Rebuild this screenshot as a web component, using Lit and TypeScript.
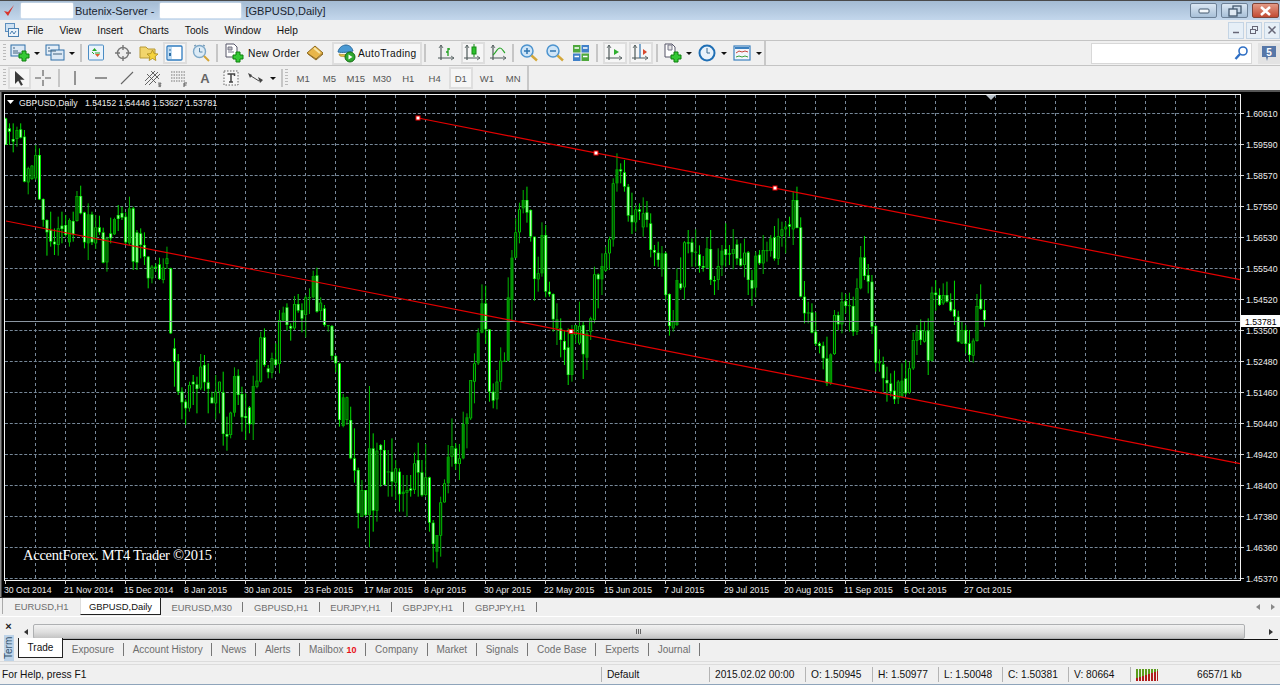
import { LitElement, html, css, svg } from 'lit';
import { customElement } from 'lit/decorators.js';

// bars are read off the reference in crop coordinates: kind top bottom high low
// kind: w = white body, o = hollow body, g = dark green body
const SEGMENTS = [
  { ox: 0, oy: 95, data: `w 70 150 68 150,w 100 110 85 150,w 132 140 85 172,o 105 132 95 155,w 103 128 85 130,w 125 260 105 262,o 220 262 215 298,o 212 252 210 255,o 180 250 150 255,w 180 313 160 315,w 312 375 310 395,w 375 412 373 482,w 405 440 350 455,w 440 448 400 480,o 400 450 365 482,w 392 402 350 445,w 390 420 360 425,g 375 442 370 455,w 378 418 350 440,o 303 378 288 380,w 303 355 272 358,w 352 442 350 460,g 358 445 325 495,w 358 442 350 450,o 397 445 360 462,w 397 412 362 420,w 412 503 398 505,o 430 502 425 530,w 415 430 368 445,g 372 418 368 420,w 360 372 330 408,w 354 368 335 375,w 365 442 352 450,g 340 445 305 450,w 340 500 335 525,w 412 503 405 525,w 415 450 400 490,w 450 485 412 510,w 485 550 483 580,o 515 550 510 565,w 515 518 505 530,w 508 552 488 555,o 518 555 490 565` },
  { ox: 165, oy: 190, data: `o 205 222 170 237,w 235 430 233 432,w 475 515 445 590,w 513 605 492 615,w 605 637 592 688,w 635 655 628 705,o 585 655 575 665,w 575 583 555 645,w 583 597 560 670,o 530 595 492 600,w 525 577 495 603,w 577 597 520 670,w 622 640 605 640,o 605 640 555 688,o 575 605 575 670,w 607 732 545 767,w 732 740 680 782,o 668 735 665 745,g 558 668 532 680,w 557 615 538 645,w 612 682 590 725,w 678 684 610 750,w 652 703 648 730,g 588 703 557 750,o 572 590 508 595,o 442 575 425 578,w 442 525 415 530,w 535 547 525 565,o 505 548 488 565,w 508 525 460 527,o 390 522 360 550,g 368 392 350 395,w 352 405 340 422,w 408 416 400 452,o 342 415 318 420,w 342 362 312 368,w 360 386 340 427,o 322 375 315 442,g 321 323 295 372,g 258 322 242 325,w 256 365 233 368,o 338 363 322 390,w 355 405 345 410,g 405 408 405 425,w 408 498 405 510,w 498 520 495 547,w 520 690 518 710,g 622 708 612 712,o 622 690 620 705` },
  { ox: 300, oy: 300, data: `w 360 475 320 478,w 475 512 385 548,w 510 640 503 685,o 570 650 540 650,w 570 645 570 648,g 445 645 258 742,w 445 632 400 695,o 452 632 428 665,w 435 450 432 560,w 450 555 420 555,g 514 516 450 590,w 515 545 415 590,o 505 548 480 600,w 515 583 505 635,g 575 582 525 635,o 570 578 525 650,w 565 572 525 590,o 490 570 458 582,w 480 518 428 590,w 517 586 480 590,o 532 585 432 590,w 532 668 530 695,w 668 732 660 787,g 705 755 705 805,o 607 707 590 770,o 550 607 538 608,g 470 550 435 580,o 438 470 355 500,w 445 492 430 510,o 475 492 432 540,g 372 475 335 478,g 352 372 340 445` },
  { ox: 165, oy: 190, data: `o 570 685 570 690,o 520 575 490 640,g 428 520 415 525,g 340 428 283 430,w 340 418 287 462,w 418 605 418 635,w 605 632 580 655,o 575 628 540 658,o 512 575 472 600,g 512 514 487 514,g 322 512 262 515,g 203 330 180 395,o 127 203 85 205,o 58 127 38 160,g 30 55 0 70,w 30 68 -10 98,w 60 140 58 155,w 140 267 140 332,o 250 268 200 305,g 135 250 97 260,w 135 305 105 322,w 305 313 275 320,w 312 388 310 425,g 388 415 340 465,w 415 450 385 502,w 453 480 420 525,w 472 555 415 585,g 430 555 405 575,o 405 435 405 460,o 408 460 335 465,w 405 493 395 567,g 430 503 420 540,o 385 425 380 450` },
  { ox: 590, oy: 140, data: `o 403 540 380 550,w 403 418 400 505,g 378 418 340 465,o 340 392 320 395,o 298 340 290 390,o 130 298 115 320,g 88 130 40 155,w 88 94 70 130,w 97 140 60 155,w 140 227 132 245,w 225 247 158 282,o 208 247 195 275,w 208 215 190 240,o 220 262 172 290,w 217 240 183 262,w 250 330 220 352,w 330 338 315 378,w 338 360 305 380,g 340 388 318 410,w 340 465 335 480,w 462 558 460 587,o 545 565 510 575,g 420 555 385 558,w 430 445 352 450,o 307 442 303 478,w 307 310 270 340,w 307 337 295 380,g 335 338 268 380,w 343 378 316 398,w 378 383 348 395,g 325 383 292 385,w 327 420 270 435,w 420 424 408 465,o 378 420 325 450,g 332 376 315 408,w 327 345 250 380,w 340 343 315 375,o 327 342 267 388,w 313 356 298 375,w 355 377 310 380,o 338 375 296 412,w 337 420 333 465,w 420 446 390 498,g 347 443 335 472,w 344 370 330 375,o 330 370 285 402,g 330 333 305 365,g 295 333 285 350,w 292 356 258 362,o 288 356 235 375,o 268 288 245 320,g 260 268 245 340,w 253 260 230 290,o 180 268 155 315,w 180 264 140 265,w 262 470 232 472,w 470 520 423 550,g 517 520 485 550,w 517 578 490 580,w 575 612 517 618,w 610 618 605 640,w 617 655 605 688,w 655 730 590 738,g 643 730 640 735,o 525 642 510 645,w 525 553 515 570,o 485 553 457 580,w 483 498 462 520,g 495 497 458 575,w 498 575 470 588,o 445 575 415 585,g 352 445 318 448,w 352 408 288 420,w 405 425 372 460,w 425 560 405 582,w 558 668 555 695,g 665 670 628 695,w 673 715 650 755,w 720 730 680 785,w 730 755 700 770,w 752 778 692 792,o 725 775 720 792,g 722 770 670 772,w 715 760 660 765,o 685 758 665 762,o 600 685 577 690,o 575 602 555 645,w 570 600 538 615,o 572 605 545 608,w 572 662 535 705,o 458 662 440 665,w 458 465 420 512,w 465 495 445 498,o 465 490 430 495,w 465 485 425 488,w 485 512 460 515,w 508 530 422 555,w 530 605 512 607,o 570 610 545 612,w 570 612 555 640,w 610 645 570 665,o 602 647 595 668,o 498 603 462 605,w 477 507 433 510,w 510 540 480 560` },
];

const BARS = SEGMENTS.flatMap((seg) =>
  seg.data.split(',').map((row) => {
    const [kind, top, bot, hi, lo] = row.split(' ');
    return {
      kind,
      top: seg.oy + Number(top) / 3,
      bot: seg.oy + Number(bot) / 3,
      hi: seg.oy + Number(hi) / 3,
      lo: seg.oy + Number(lo) / 3,
    };
  })
);

const PRICES = ['1.60610', '1.59590', '1.58570', '1.57550', '1.56530', '1.55540', '1.54520', '1.53500', '1.52480', '1.51460', '1.50440', '1.49420', '1.48400', '1.47380', '1.46360', '1.45370'];
const DATES = ['30 Oct 2014', '21 Nov 2014', '15 Dec 2014', '8 Jan 2015', '30 Jan 2015', '23 Feb 2015', '17 Mar 2015', '8 Apr 2015', '30 Apr 2015', '22 May 2015', '15 Jun 2015', '7 Jul 2015', '29 Jul 2015', '20 Aug 2015', '11 Sep 2015', '5 Oct 2015', '27 Oct 2015'];
const CHART_TABS = ['EURUSD,H1', 'GBPUSD,Daily', 'EURUSD,M30', 'GBPUSD,H1', 'EURJPY,H1', 'GBPJPY,H1', 'GBPJPY,H1'];
const TERM_TABS = ['Exposure', 'Account History', 'News', 'Alerts', 'Mailbox', 'Company', 'Market', 'Signals', 'Code Base', 'Experts', 'Journal'];
const PERIODS = ['M1', 'M5', 'M15', 'M30', 'H1', 'H4', 'D1', 'W1', 'MN'];

const plus = (x: number, y: number) => svg`<path d="M${x + 3} ${y}h4v3h3v4h-3v3h-4v-3h-3v-4h3z" fill="#35c935" stroke="#0d7f0d" stroke-width="1"/>`;
const axes = svg`<path d="M4 2v15M1 15h16" fill="none" stroke="#4f5a5a" stroke-width="1.2"/><path d="M2 5l2-3 2 3M14 13l3 2-3 2" fill="none" stroke="#4f5a5a" stroke-width=".8"/>`;

// 20x20 toolbar pictures
const ICONS: Record<string, unknown> = {
  newChart: svg`<rect x="1" y="2" width="14" height="11" fill="#dbe8f5" stroke="#2f6fa8"/><path d="M3 5h2M3 8h5M3 10h8" stroke="#40627f"/>${plus(9, 8)}`,
  profiles: svg`<rect x="1" y="2" width="13" height="10" fill="#e5eef7" stroke="#2f6fa8"/><rect x="6" y="7" width="13" height="10" fill="#dbe8f5" stroke="#2f6fa8"/><path d="M3 5h2M3 8h8M8 11h9" stroke="#40627f"/>`,
  market: svg`<rect x="1.500" y="2" width="15" height="15" rx="1" fill="#eaf3fb" stroke="#4a8cc4"/><path d="M5 8l2.500-3 2.500 3z" fill="#23a823"/><path d="M8 10h5M5 9l2 2" stroke="#23a823"/><path d="M8 11l2.500 3 2.500-3z" fill="#df5a2c"/>`,
  nav: svg`<circle cx="10" cy="10" r="5.500" fill="#eee" stroke="#777" stroke-width="1.400"/><path d="M10 2v5M10 13v5M2 10h5M13 10h5" stroke="#777" stroke-width="1.400"/>`,
  folder: svg`<path d="M1 4h6l2 2h7v9H1z" fill="#f2d56c" stroke="#b89a36"/><path d="M13.500 7l1.700 3.600 3.800.4-2.900 2.600.8 3.900-3.400-2-3.400 2 .8-3.900-2.900-2.600 3.800-.4z" fill="#f6d43e" stroke="#a98a1e" stroke-width=".8"/>`,
  data: svg`<rect x="2" y="3" width="15" height="14" rx="1" fill="#fff" stroke="#2f7cc0" stroke-width="1.300"/><rect x="3" y="4" width="4" height="12" fill="#bfdcf3"/><path d="M4 7h2" stroke="#2a6ca4"/><path d="M4 10h2v3H4z" fill="#2a6ca4"/>`,
  tester: svg`<circle cx="8.500" cy="8.500" r="6" fill="#dcebf6" stroke="#7da8c8" stroke-width="1.400"/><path d="M8.500 5v4h3" fill="none" stroke="#5d89ab"/><path d="M3 3l2-1M12 2l2 1" stroke="#5d89ab"/><path d="M13 13l5 5" stroke="#d4a436" stroke-width="2"/>`,
  order: svg`<path d="M2 1h8l3 3v10H2z" fill="#fff" stroke="#556"/><path d="M4 4h4v3H4zM4 9h6" fill="#bbb" stroke="#778"/>${plus(9, 9)}`,
  gold: svg`<path d="M10 3l8 7-7 6-9-6z" fill="#e8b64a" stroke="#8f6a1e"/><path d="M3 11l8 6 7-6" fill="none" stroke="#8f6a1e"/><path d="M9 5l6 5" stroke="#f8e6a8" stroke-width="2"/>`,
  auto: svg`<path d="M2 9c1-5 5-7 8-7s6 2 7 6c-3 1-11 2-15 1z" fill="#4a9ad4" stroke="#2a6a9c"/><path d="M3 11c3 1 9 1 13-1l1 2c-4 2-10 2-13 1z" fill="#e8c44c" stroke="#a98a1e" stroke-width=".7"/><circle cx="14" cy="14" r="5" fill="#2fa82f" stroke="#156b15"/><path d="M12.500 11.500v5l4-2.500z" fill="#fff"/>`,
  bars: svg`${axes}<path d="M11 5v8M9 9h2M11 6h2" fill="none" stroke="#1fa01f" stroke-width="1.300"/>`,
  candle: svg`${axes}<path d="M11 1v13" stroke="#148a14"/><rect x="9" y="4" width="4" height="7" fill="#2cc12c" stroke="#148a14"/>`,
  line: svg`${axes}<path d="M4 12c3-2 4-7 7-7 2 0 3 3 5 5" fill="none" stroke="#2aa52a" stroke-width="1.100"/>`,
  zoomIn: svg`<circle cx="8" cy="8" r="6" fill="#cfe5f7" stroke="#4d94cf" stroke-width="1.500"/><path d="M5 8h6M8 5v6" stroke="#2f74b0" stroke-width="1.500"/><path d="M12.500 12.500l5.500 5" stroke="#d3a73a" stroke-width="2.400"/>`,
  zoomOut: svg`<circle cx="8" cy="8" r="6" fill="#cfe5f7" stroke="#4d94cf" stroke-width="1.500"/><path d="M5 8h6" stroke="#2f74b0" stroke-width="1.500"/><path d="M12.500 12.500l5.500 5" stroke="#d3a73a" stroke-width="2.400"/>`,
  tile: svg`<rect x="2" y="2" width="7.500" height="7.500" fill="#4ea83c"/><rect x="10.500" y="2" width="7.500" height="7.500" fill="#3f80c8"/><rect x="2" y="10.500" width="7.500" height="7.500" fill="#3f80c8"/><rect x="10.500" y="10.500" width="7.500" height="7.500" fill="#4ea83c"/><path d="M3.500 5h4.500M12 5h4.500M3.500 13.500h4.500M12 13.500h4.500" stroke="#fff" stroke-width="1.500"/>`,
  shift: svg`${axes}<path d="M9 6v6l5-3z" fill="#2fae2f"/>`,
  scroll: svg`${axes}<path d="M9 1v14" stroke="#2f74b0" stroke-width="1.200"/><path d="M16 9l-4-3v6z" fill="#d8472c"/>`,
  addDoc: svg`<path d="M3 1h7l3 3v10H3z" fill="#fff" stroke="#556"/><path d="M6 2h4v5H6z" fill="#e5e5e5" stroke="#778"/>${plus(9, 9)}`,
  clock: svg`<circle cx="10" cy="10" r="7.500" fill="#e8f2fb" stroke="#1f6fb5" stroke-width="2"/><path d="M10 5v5h3" fill="none" stroke="#3a6a90"/>`,
  template: svg`<rect x="2" y="3" width="16" height="14" fill="#f2f6fb" stroke="#3b80bf" stroke-width="1.200"/><rect x="3" y="4" width="14" height="2" fill="#3b80bf"/><path d="M4 10l3-2 3 1 3-1 3 1" fill="none" stroke="#c6453a"/><path d="M4 14l3-1 3 1 3-1 3 1" fill="none" stroke="#3aa03a"/>`,
  cursor: svg`<path d="M5 3v13l3.200-3.200 2.800 5 1.900-1-2.800-5h4.500z" fill="#3a3a3a"/>`,
  cross: svg`<path d="M10 2v6M10 12v6M2 10h6M12 10h6" stroke="#555" stroke-width="1.100"/>`,
  vline: svg`<path d="M10 3v14" stroke="#555" stroke-width="1.200"/>`,
  hline: svg`<path d="M4 10h12" stroke="#555" stroke-width="1.200"/>`,
  trend: svg`<path d="M4 16L16 4" stroke="#666" stroke-width="1.100"/>`,
  channel: svg`<path d="M2 13L12 3M2 17L15 4M6 17L17 6M4 6l9 9M8 3l8 8" stroke="#555" stroke-width=".9"/><path d="M15 15h3v.8h-2.200v1h2v.8h-2v1H18" fill="none" stroke="#555" stroke-width=".7"/>`,
  fibo: svg`<path d="M2 4h14M2 7h14M2 10h14M2 13h14" stroke="#777" stroke-dasharray="1.500 1"/><path d="M15 15h3M15 15v4M15 17h2.500" fill="none" stroke="#555"/>`,
  textBox: svg`<rect x="3" y="3" width="14" height="14" fill="#f7f7f7" stroke="#666" stroke-dasharray="1.500 1.500"/><path d="M6.500 6h7v2M10 6v8M8 14h4" fill="none" stroke="#444" stroke-width="1.500"/>`,
  arrows: svg`<path d="M2 5l4 2-2 3zM12 9l5 3-3 3z" fill="#444"/><path d="M5 8l8 5" stroke="#444"/>`,
};

@customElement('chart-view')
export class ChartView extends LitElement {
  static styles = css`
    :host { display: block; height: 505px; background: #000; }
    svg { display: block; }
    text { font-family: "Liberation Sans", Arial, sans-serif; font-size: 9.7px; fill: #ececec; }
    .brand { font-family: "Liberation Serif", serif; font-size: 14.5px; fill: #fff; }
  `;

  private bar(i: number) {
    const b = BARS[i];
    const x = 5.7 + 3.75 * i;
    const h = Math.max(b.bot - b.top, 1.2);
    const edge = b.kind === 'g' ? '#00a800' : b.kind === 'o' ? '#00c400' : '#00f000';
    const fill = b.kind === 'g' ? '#008400' : b.kind === 'o' ? '#001c00' : '#e8ffe8';
    return svg`
      <rect x=${x - 0.5} y=${b.hi} width="1" height=${b.lo - b.hi} fill=${b.kind === 'w' ? '#00e000' : '#00b400'} />
      <rect x=${x - 1.5} y=${b.top} width="3" height=${h} fill=${edge} />
      <rect x=${x - 0.5} y=${b.top + 0.6} width="1" height=${Math.max(h - 1.2, 0)} fill=${fill} />
    `;
  }

  // axis text is squeezed a little to get Tahoma's narrow figures
  private label(x: number, y: number, text: string, dark = false) {
    return svg`<text transform="translate(${x} ${y}) scale(.9 1)" style=${dark ? 'fill:#000' : ''}>${text}</text>`;
  }

  render() {
    const ys = PRICES.map((_, i) => 113 + 31 * i);
    const xs = Array.from({ length: 42 }, (_, i) => 5 + 30 * i).filter((x) => x < 1240);
    return html`
      <svg width="1280" height="505" viewBox="0 92 1280 505">
        <rect x="0" y="92" width="1.500" height="505" fill="#8a8a8a" />
        ${xs.slice(1).map((x) => svg`<path d="M${x + 0.5} 95V578" stroke="#778899" stroke-dasharray="3 3" />`)}
        ${ys.map((y) => svg`<path d="M5 ${y + 0.5}H1240" stroke="#778899" stroke-dasharray="3 1.800" />
          <path d="M1240 ${y + 0.5}h4" stroke="#d0d0d0" />`)}
        ${BARS.map((_, i) => this.bar(i))}
        <path d="M4.500 321.500H1240" stroke="#8b96a2" />
        <path d="M6 221L1240 463.600M418 118L1240 279.600" stroke="#e40000" stroke-width="1.200" fill="none" />
        ${[[418, 118], [596, 153], [775, 188], [571, 331.500]].map(([x, y]) => svg`
          <rect x=${x - 2.500} y=${y - 2.500} width="5" height="5" fill="#f00000" />
          <rect x=${x - 1.500} y=${y - 1.500} width="3" height="3" fill="#fff" />`)}
        <rect x="4.500" y="94.500" width="1236" height="486" fill="none" stroke="#f4f4f4" />
        <polygon points="986,95 996,95 991,100" fill="#b8c0c8" />
        <polygon points="7,100 14,100 10.500,104" fill="#fff" />
        ${this.label(19, 105.500, 'GBPUSD,Daily')}
        <text x="85" y="105.500" textLength="132" lengthAdjust="spacingAndGlyphs">1.54152 1.54446 1.53627 1.53781</text>
        ${PRICES.map((p, i) => this.label(1246, ys[i] + 3.500, p))}
        <rect x="1241" y="315" width="39" height="12" fill="#fff" />
        ${this.label(1245, 325, '1.53781', true)}
        ${DATES.map((d, i) => svg`<path d="M${5.500 + 60 * i} 580v4" stroke="#d0d0d0" />
          ${this.label(4 + 60 * i, 592.500, d)}`)}
        <text class="brand" x="23" y="560" textLength="189">AccentForex. MT4 Trader ©2015</text>
      </svg>
    `;
  }
}

@customElement('app-root')
export class AppRoot extends LitElement {
  static styles = css`
    :host {
      display: block; width: 1280px; height: 685px; overflow: hidden; background: #f0f0f0;
      font-family: "Liberation Sans", Arial, sans-serif; font-size: 10.2px; color: #111; white-space: nowrap;
    }
    .icon { width: 20px; height: 20px; display: block; flex: none; }

    .title {
      height: 20px; box-sizing: border-box; border-top: 1px solid #4a4a4a; display: flex; align-items: center;
      background: linear-gradient(#a4bbd3, #c3d7ec); font-size: 11px; color: #1a2530; padding-left: 3px;
    }
    .mask { height: 15px; background: #fff; border-radius: 1px; box-shadow: 0 0 2px #fff; }
    .m1 { width: 52px; margin: 0 2px 0 6px; }
    .m2 { width: 81px; margin: 0 4px 0 6px; }
    .check { width: 12px; height: 14px; display: block; }
    .win { margin-left: auto; display: flex; gap: 4px; padding-right: 1px; align-items: center; }
    .wb {
      width: 27px; height: 15px; box-sizing: border-box; border: 1px solid #6c8096; border-radius: 2px;
      background: linear-gradient(#dbe7f3, #a8c0d8); display: flex; align-items: center; justify-content: center;
    }
    .wb.close { background: linear-gradient(#e39a86, #c24a32); border-color: #7d4438; }

    .menu { height: 20px; display: flex; align-items: center; padding-left: 5px; }
    .menu .logo { width: 14px; height: 15px; margin-right: 8px; }
    .menu span { margin-right: 16px; }
    .mdi { margin-left: auto; display: flex; gap: 2px; height: 17px; }
    .mdi div {
      width: 16px; box-sizing: border-box; border: 1px solid #c4d4e4; background: #e6eff7;
      display: flex; align-items: center; justify-content: center;
    }

    .rebar { height: 49px; border-top: 1px solid #c4c4c4; border-bottom: 2px solid #555; }
    .row { height: 24px; display: flex; align-items: center; }
    .row + .row { border-top: 1px solid #c4c4c4; }
    .tb { height: 100%; display: flex; align-items: center; border-right: 2px solid #c8c8c8; box-sizing: border-box; padding-left: 3px; }
    .t1 { width: 766px; }
    .t2 { width: 529px; }
    .sep { width: 2px; height: 18px; background: #c6c6c6; margin: 0 2px; flex: none; }
    .sep.wide { margin-right: 8px; }
    .sep.mid { margin-right: 4px; }
    .sep.tight { margin-left: 0; }
    .btn { width: 26px; height: 22px; display: flex; align-items: center; justify-content: center; flex: none; box-sizing: border-box; }
    .btn.on { border: 2px solid #dedede; background: #f6f6f6; width: 24px; margin: 0 1px; }
    .btn.first { width: 23px; margin: 0 -1px 0 0; }
    .dd { width: 35px; height: 22px; display: flex; align-items: center; padding-left: 2px; box-sizing: border-box; flex: none; }
    .arrow { width: 0; height: 0; border: 3px solid transparent; border-top: 3px solid #111; border-bottom: 0; margin-left: 4px; }
    .newo { display: flex; align-items: center; gap: 4px; padding-left: 4px; letter-spacing: .3px; flex: none; width: 82px; box-sizing: border-box; }
    .auto {
      width: 90px; height: 23px; box-sizing: border-box; border: 2px solid #dedede; background: #f6f6f6;
      display: flex; align-items: center; gap: 2px; padding-left: 2px; margin-left: 4px; flex: none; letter-spacing: .3px;
    }
    .per { width: 26.3px; height: 22px; display: flex; align-items: center; justify-content: center; color: #555; font-size: 9.5px; box-sizing: border-box; flex: none; }
    .per.on { border: 2px solid #dedede; background: #f6f6f6; width: 24px; margin: 0 1px; }
    .letter { font-weight: 700; font-size: 13px; color: #666; }
    .handle { width: 3px; height: 18px; margin-right: 2px; flex: none; background: repeating-linear-gradient(#bbb 0 1px, transparent 1px 3px); }
    .search {
      margin-left: auto; width: 161px; height: 21px; background: #fff; box-sizing: border-box; border: 1px solid #d8d8d8;
      display: flex; align-items: center; justify-content: flex-end; padding-right: 2px;
    }
    .bubble { margin: 0 0 0 6px; width: 22px; height: 21px; display: flex; align-items: center; justify-content: center; background: #e3e3e3; }

    .ctabs { height: 20px; display: flex; align-items: stretch; border-bottom: 1px solid #fff; padding-left: 2px; color: #6e6e6e; box-shadow: inset 0 1px 0 #2f2f2f; box-sizing: border-box; font-size: 9.4px; }
    .ctab { display: flex; align-items: center; justify-content: center; margin: 5px 0 4px; border-right: 1px solid #777; padding: 0 10.500px; flex: none; }
    .ctab.first { border: 0; width: 78px; padding: 0; margin: 1px 0 2px; box-sizing: border-box; border-left: 1px solid #aaa; }
    .ctab.on { background: #fff; color: #111; margin: 1px 0 1px; border-right: 1.500px solid #222; border-bottom: 1.500px solid #222; border-left: 1px solid #ddd; padding: 0; width: 81px; box-sizing: border-box; }
    .scrollers { margin-left: auto; display: flex; align-items: center; gap: 11px; padding-right: 5px; }
    .lt, .rt { width: 0; height: 0; border: 3.500px solid transparent; }
    .lt { border-right: 4px solid #888; border-left: 0; }
    .rt { border-left: 4px solid #888; border-right: 0; }

    .term { height: 45px; box-sizing: border-box; display: flex; border-bottom: 1px solid #dcdcdc; }
    .side { width: 17px; flex: none; display: flex; flex-direction: column; align-items: center; padding-top: 4px; box-sizing: border-box; }
    .x { font-weight: 700; font-size: 11px; line-height: 10px; color: #222; }
    .vlabel {
      margin-top: 4px; writing-mode: vertical-rl; transform: rotate(180deg); background: #bdd3e8; color: #35536d;
      width: 10px; height: 26px; font-size: 10px; line-height: 10px; text-align: center;
    }
    .tmain { flex: 1; padding: 7px 2px 0 1px; min-width: 0; }
    .sbar { height: 15px; display: flex; border-bottom: 1.500px solid #111; align-items: stretch; }
    .send { width: 15px; display: flex; align-items: center; justify-content: center; flex: none; }
    .send.right { width: 33px; justify-content: flex-end; padding-right: 5px; box-sizing: border-box; }
    .send .lt { border-right-color: #333; }
    .send .rt { border-left-color: #333; }
    .thumb {
      flex: 1; border: 1px solid #aeb0b2; border-radius: 2px; background: linear-gradient(#f2f2f2, #dedede 55%, #c4c4c4);
      display: flex; align-items: center; justify-content: center;
    }
    .grip { width: 6px; height: 5px; background: repeating-linear-gradient(90deg, #666 0 1px, transparent 1px 2px); }
    .ttabs { height: 18px; display: flex; align-items: stretch; color: #6e6e6e; font-size: 10px; }
    .ttab { margin: 3px 0 2px; padding: 0 8.800px; border-right: 1px solid #777; display: flex; align-items: center; flex: none; }
    .ttab.on { width: 45px; padding: 0; justify-content: center; margin: -2px 0 0; background: #fff; color: #111; border-right: 1.500px solid #222; border-bottom: 1.500px solid #222; border-left: 1px solid #222; box-sizing: border-box; }
    .ttab b { color: #e8101a; font-size: 9px; margin-left: 3px; }

    .status {
      height: 21px; display: flex; align-items: center; margin-top: 2px; border-top: 1px solid #dcdcdc; border-bottom: 1px solid #8ea4ba;
      box-sizing: border-box; color: #111;
    }
    .cell { height: 15px; display: flex; align-items: center; padding-left: 5px; box-sizing: border-box; flex: none; border-left: 1px solid #b4b4b4; }
    .cell.help { border: 0; width: 601px; padding-left: 2px; }
    .sig { width: 22px; height: 12px; display: block; }
    .kb { margin-left: 39px; }
  `;

  private btn(name: string, state = '') {
    return html`<div class="btn ${state}"><svg class="icon" viewBox="0 0 20 20">${ICONS[name]}</svg></div>`;
  }

  private dd(name: string) {
    return html`<div class="dd"><svg class="icon" viewBox="0 0 20 20">${ICONS[name]}</svg><i class="arrow"></i></div>`;
  }

  private statusCell(width: number, text: string) {
    return html`<div class="cell" style="width:${width}px">${text}</div>`;
  }

  render() {
    return html`
      <div class="title">
        <svg class="check" viewBox="0 0 12 14"><path d="M1 7l4 5 6-11-6 7z" fill="#d8342c" /></svg>
        <div class="mask m1"></div>
        <span>Butenix-Server -</span>
        <div class="mask m2"></div>
        <span>[GBPUSD,Daily]</span>
        <div class="win">
          <div class="wb"><svg width="12" height="8"><rect x="1" y="2" width="10" height="4" rx="1" fill="#f4f8fc" stroke="#42586e" /></svg></div>
          <div class="wb"><svg width="14" height="12"><rect x="5" y="1" width="8" height="7" fill="none" stroke="#42586e" stroke-width="1.300" /><rect x="1" y="4" width="8" height="7" fill="#dfe9f3" stroke="#42586e" stroke-width="1.300" /></svg></div>
          <div class="wb close"><svg width="13" height="10"><path d="M2 1l9 8M11 1l-9 8" stroke="#fff" stroke-width="2.500" /></svg></div>
        </div>
      </div>

      <div class="menu">
        <svg class="logo" viewBox="0 0 14 15"><rect x=".5" y=".5" width="9" height="8" fill="#cfe1f2" stroke="#5d8fbe" /><rect x="3.500" y="5.500" width="10" height="8" fill="#eaf2fa" stroke="#4a7fb0" /><path d="M5 11l2-3 2 3 2-3" fill="none" stroke="#4a7fb0" /></svg>
        <span>File</span><span>View</span><span>Insert</span><span>Charts</span><span>Tools</span><span>Window</span><span>Help</span>
        <div class="mdi">
          <div><svg width="10" height="10"><path d="M2 7.500h6" stroke="#667" stroke-width="1.500" /></svg></div>
          <div><svg width="10" height="10"><rect x="3.500" y="1.500" width="5" height="4" fill="none" stroke="#667" /><rect x="1.500" y="4.500" width="5" height="4" fill="#e6eff7" stroke="#667" /></svg></div>
          <div><svg width="10" height="10"><path d="M1.500 1.500l7 7M8.500 1.500l-7 7" stroke="#667" stroke-width="1.500" /></svg></div>
        </div>
      </div>

      <div class="rebar">
        <div class="row">
          <div class="tb t1">
            <div class="handle"></div>
            ${this.dd('newChart')}${this.dd('profiles')}
            <div class="sep"></div>
            ${this.btn('market')}${this.btn('nav')}${this.btn('folder')}${this.btn('data', 'on')}${this.btn('tester')}
            <div class="sep"></div>
            <div class="newo"><svg class="icon" viewBox="0 0 20 20">${ICONS.order}</svg>New Order</div>
            ${this.btn('gold')}
            <div class="auto"><svg class="icon" viewBox="0 0 20 20">${ICONS.auto}</svg>AutoTrading</div>
            <div class="sep wide"></div>
            ${this.btn('bars')}${this.btn('candle', 'on')}${this.btn('line')}
            <div class="sep tight"></div>
            ${this.btn('zoomIn')}${this.btn('zoomOut')}${this.btn('tile')}
            <div class="sep mid"></div>
            ${this.btn('shift', 'on')}${this.btn('scroll', 'on')}
            <div class="sep"></div>
            ${this.dd('addDoc')}${this.dd('clock')}${this.dd('template')}
          </div>
          <div class="search">
            <svg width="16" height="16" viewBox="0 0 16 16"><circle cx="10" cy="6" r="4" fill="none" stroke="#2f6fc4" stroke-width="1.600" /><path d="M7 9l-4.500 5" stroke="#2f6fc4" stroke-width="2.400" /></svg>
          </div>
          <div class="bubble">
            <svg width="16" height="17" viewBox="0 0 16 17"><path d="M1 1h14v11H7l-1 4-1-4H1z" fill="#5878a8" /><text x="8" y="10.500" text-anchor="middle" font-size="10" font-weight="700" fill="#fff" font-family="Liberation Sans">5</text></svg>
          </div>
        </div>
        <div class="row">
          <div class="tb t2">
            <div class="handle"></div>
            ${this.btn('cursor', 'on first')}${this.btn('cross')}
            <div class="sep"></div>
            ${this.btn('vline')}${this.btn('hline')}${this.btn('trend')}${this.btn('channel')}${this.btn('fibo')}
            <div class="btn"><span class="letter">A</span></div>
            ${this.btn('textBox')}
            ${this.dd('arrows')}
            <div class="sep"></div>
            <div class="handle"></div>
            ${PERIODS.map((p) => html`<div class="per ${p === 'D1' ? 'on' : ''}">${p}</div>`)}
          </div>
        </div>
      </div>

      <chart-view></chart-view>

      <div class="ctabs">
        ${CHART_TABS.map((t, i) => html`<div class="ctab ${i === 1 ? 'on' : ''} ${i === 0 ? 'first' : ''}">${t}</div>`)}
        <div class="scrollers"><i class="lt"></i><i class="rt"></i></div>
      </div>

      <div class="term">
        <div class="side"><div class="x">×</div><div class="vlabel">Term</div></div>
        <div class="tmain">
          <div class="sbar">
            <div class="send"><i class="lt"></i></div>
            <div class="thumb"><i class="grip"></i></div>
            <div class="send right"><i class="rt"></i></div>
          </div>
          <div class="ttabs">
            <div class="ttab on">Trade</div>
            ${TERM_TABS.map((t) => html`<div class="ttab">${t}${t === 'Mailbox' ? html`<b>10</b>` : ''}</div>`)}
          </div>
        </div>
      </div>

      <div class="status">
        <div class="cell help">For Help, press F1</div>
        ${this.statusCell(108, 'Default')}
        ${this.statusCell(96, '2015.02.02 00:00')}
        ${this.statusCell(67, 'O: 1.50945')}
        ${this.statusCell(66, 'H: 1.50977')}
        ${this.statusCell(64, 'L: 1.50048')}
        ${this.statusCell(66, 'C: 1.50381')}
        ${this.statusCell(62, 'V: 80664')}
        <div class="cell">
          <svg class="sig" viewBox="0 0 22 12">
            ${[0, 3, 6, 9, 12, 15, 18, 21].map((x, i) => svg`
              <rect x=${x} y="0" width="2" height=${9 - i} fill="#5c9c1c" />
              <rect x=${x} y=${9 - i} width="2" height=${3 + i} fill="#b01c1c" />`)}
          </svg>
          <span class="kb">6657/1 kb</span>
        </div>
      </div>
    `;
  }
}
